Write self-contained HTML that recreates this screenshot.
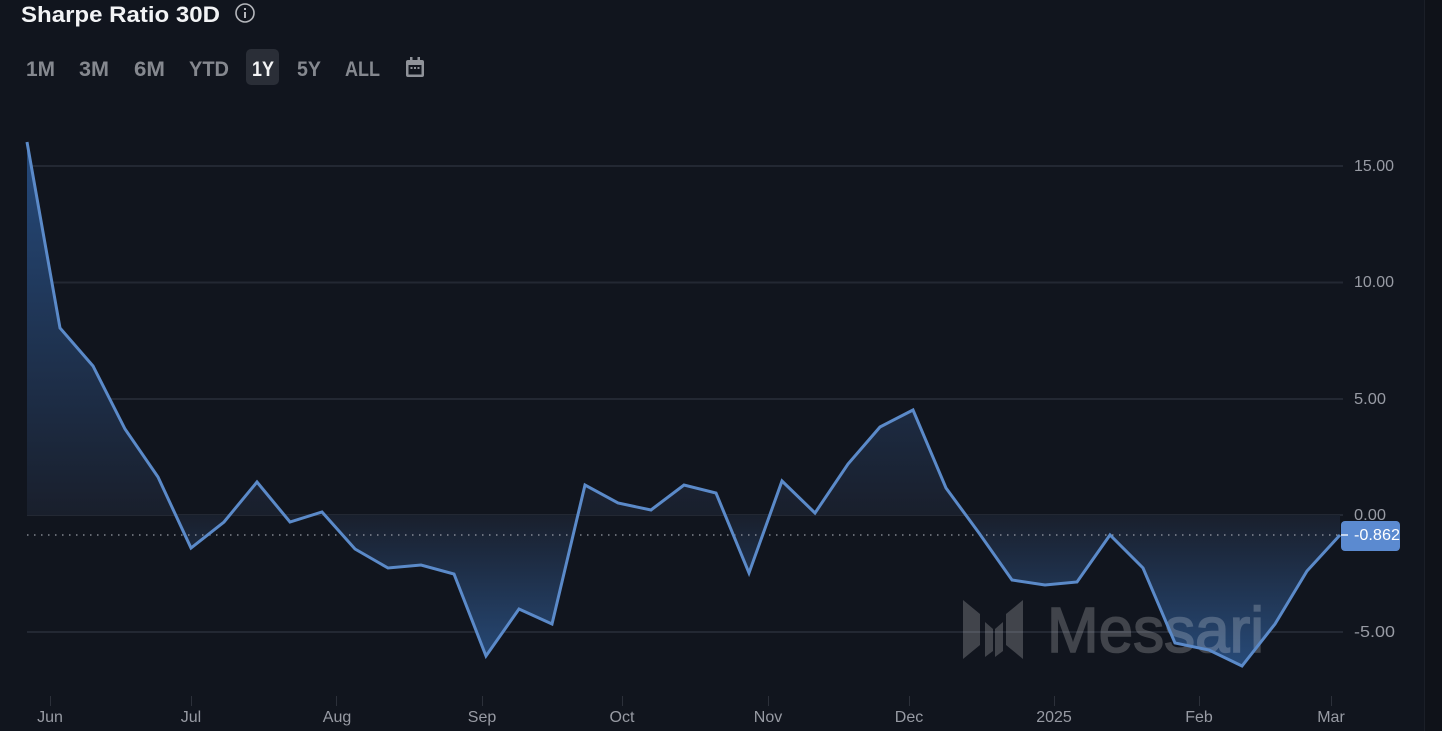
<!DOCTYPE html>
<html><head><meta charset="utf-8"><style>
html,body{margin:0;padding:0;background:#11151e;width:1442px;height:731px;overflow:hidden}
svg{display:block}
text{font-family:"Liberation Sans",sans-serif}
.r{fill:#85888f;font-size:21px;font-weight:700}
.y{fill:#989ba4;font-size:16px}
.x{fill:#989ba4;font-size:16px;text-anchor:middle}
</style></head><body>
<svg width="1442" height="731" viewBox="0 0 1442 731" xmlns="http://www.w3.org/2000/svg">
<defs>
<linearGradient id="g" gradientUnits="userSpaceOnUse" x1="0" y1="142" x2="0" y2="666">
<stop offset="0" stop-color="#254a7c"/>
<stop offset="0.71" stop-color="#191f2c"/>
<stop offset="1" stop-color="#274a78"/>
</linearGradient>
</defs>
<rect width="1442" height="731" fill="#11151e"/>
<rect x="1425" y="0" width="17" height="731" fill="#0f1219"/>
<rect x="1424" y="0" width="1" height="731" fill="#1b1f28"/>

<g stroke="#232833" stroke-width="2">
<line x1="27" y1="166" x2="1343" y2="166"/>
<line x1="27" y1="282.500" x2="1343" y2="282.500"/>
<line x1="27" y1="399" x2="1343" y2="399"/>
<line x1="27" y1="515" x2="1343" y2="515"/>
<line x1="27" y1="632" x2="1343" y2="632"/>
</g>

<polygon fill="url(#g)" points="27,142 60,328 93,366 125,429 158,477 191,548 224,522 257,482 290,522 322,512 355,549 388,568 421,565 454,574 486,656 519,609 552,624 585,485 618,503 651,510 684,485 716,493 749,573 782,481 815,513 848,464 880,427 913,410 946,488 979,533 1012,580 1045,585 1077,582 1110,535 1143,568 1175,643 1209,650 1242,666 1275,624 1307,571 1340,535 1340,515 27,515"/>

<line x1="27" y1="535" x2="1342" y2="535" stroke="#b8bcc4" stroke-width="1" stroke-dasharray="1.500 5.500"/>

<g fill="#ffffff" stroke="#ffffff" opacity="0.2">
<polygon stroke="none" points="963,600 980,614 980,645 963,659"/>
<polygon stroke="none" points="985,622 993,629 993,651 985,657"/>
<polygon stroke="none" points="995,629 1003,622 1003,651 995,657"/>
<polygon stroke="none" points="1006,614 1023,600 1023,659 1006,645"/>
<text x="1047" y="652" font-size="64" stroke-width="1.600" textLength="217" lengthAdjust="spacingAndGlyphs">Messari</text>
</g>

<polyline fill="none" stroke="#5b8ac9" stroke-width="3" stroke-linejoin="miter" points="27,142 60,328 93,366 125,429 158,477 191,548 224,522 257,482 290,522 322,512 355,549 388,568 421,565 454,574 486,656 519,609 552,624 585,485 618,503 651,510 684,485 716,493 749,573 782,481 815,513 848,464 880,427 913,410 946,488 979,533 1012,580 1045,585 1077,582 1110,535 1143,568 1175,643 1209,650 1242,666 1275,624 1307,571 1340,535"/>

<text x="21" y="22" fill="#f2f3f5" font-size="22" font-weight="700" textLength="199" lengthAdjust="spacingAndGlyphs">Sharpe Ratio 30D</text>
<circle cx="245" cy="13" r="9" fill="none" stroke="#b5b7bc" stroke-width="1.600"/>
<rect x="244" y="12" width="2" height="6" fill="#b5b7bc"/>
<rect x="244" y="8" width="2" height="2" fill="#b5b7bc"/>

<rect x="246" y="49" width="33" height="36" rx="5" fill="#2a2e37"/>
<text class="r" x="26" y="76" textLength="29" lengthAdjust="spacingAndGlyphs">1M</text>
<text class="r" x="79" y="76" textLength="30" lengthAdjust="spacingAndGlyphs">3M</text>
<text class="r" x="134" y="76" textLength="31" lengthAdjust="spacingAndGlyphs">6M</text>
<text class="r" x="189" y="76" textLength="40" lengthAdjust="spacingAndGlyphs">YTD</text>
<text class="r" x="252" y="76" textLength="22" lengthAdjust="spacingAndGlyphs" style="fill:#f4f5f6">1Y</text>
<text class="r" x="297" y="76" textLength="24" lengthAdjust="spacingAndGlyphs">5Y</text>
<text class="r" x="345" y="76" textLength="35" lengthAdjust="spacingAndGlyphs">ALL</text>

<g fill="#8f9299">
<path fill-rule="evenodd" d="M408 60h2v-3h2.500v3h5v-3h2.500v3h2a2 2 0 0 1 2 2v13a2 2 0 0 1-2 2h-14a2 2 0 0 1-2-2v-13a2 2 0 0 1 2-2zM408.500 65v9.500h13v-9.500z"/>
<rect x="410.500" y="67" width="2" height="2"/><rect x="414" y="67" width="2" height="2"/><rect x="417.500" y="67" width="2" height="2"/>
</g>

<text class="y" x="1354" y="171" textLength="40" lengthAdjust="spacingAndGlyphs">15.00</text>
<text class="y" x="1354" y="287" textLength="40" lengthAdjust="spacingAndGlyphs">10.00</text>
<text class="y" x="1354" y="404" textLength="32" lengthAdjust="spacingAndGlyphs">5.00</text>
<text class="y" x="1354" y="520" textLength="32" lengthAdjust="spacingAndGlyphs">0.00</text>
<text class="y" x="1354" y="637" textLength="41" lengthAdjust="spacingAndGlyphs">-5.00</text>

<rect x="1341" y="521" width="59" height="30" rx="4" fill="#5b8ad0"/>
<line x1="1341" y1="535" x2="1348" y2="535" stroke="#e8eefa" stroke-width="1.500"/>
<text x="1354" y="540" fill="#ffffff" font-size="16" textLength="46" lengthAdjust="spacingAndGlyphs">-0.862</text>

<g stroke="#2c303a" stroke-width="1">
<line x1="50.500" y1="696" x2="50.500" y2="706"/>
<line x1="191.500" y1="696" x2="191.500" y2="706"/>
<line x1="336.500" y1="696" x2="336.500" y2="706"/>
<line x1="482.500" y1="696" x2="482.500" y2="706"/>
<line x1="622.500" y1="696" x2="622.500" y2="706"/>
<line x1="768.500" y1="696" x2="768.500" y2="706"/>
<line x1="909.500" y1="696" x2="909.500" y2="706"/>
<line x1="1054.500" y1="696" x2="1054.500" y2="706"/>
<line x1="1199.500" y1="696" x2="1199.500" y2="706"/>
<line x1="1331.500" y1="696" x2="1331.500" y2="706"/>
</g>
<text class="x" x="50" y="722">Jun</text>
<text class="x" x="191" y="722">Jul</text>
<text class="x" x="337" y="722">Aug</text>
<text class="x" x="482" y="722">Sep</text>
<text class="x" x="622" y="722">Oct</text>
<text class="x" x="768" y="722">Nov</text>
<text class="x" x="909" y="722">Dec</text>
<text class="x" x="1054" y="722">2025</text>
<text class="x" x="1199" y="722">Feb</text>
<text class="x" x="1331" y="722">Mar</text>
</svg>
</body></html>
